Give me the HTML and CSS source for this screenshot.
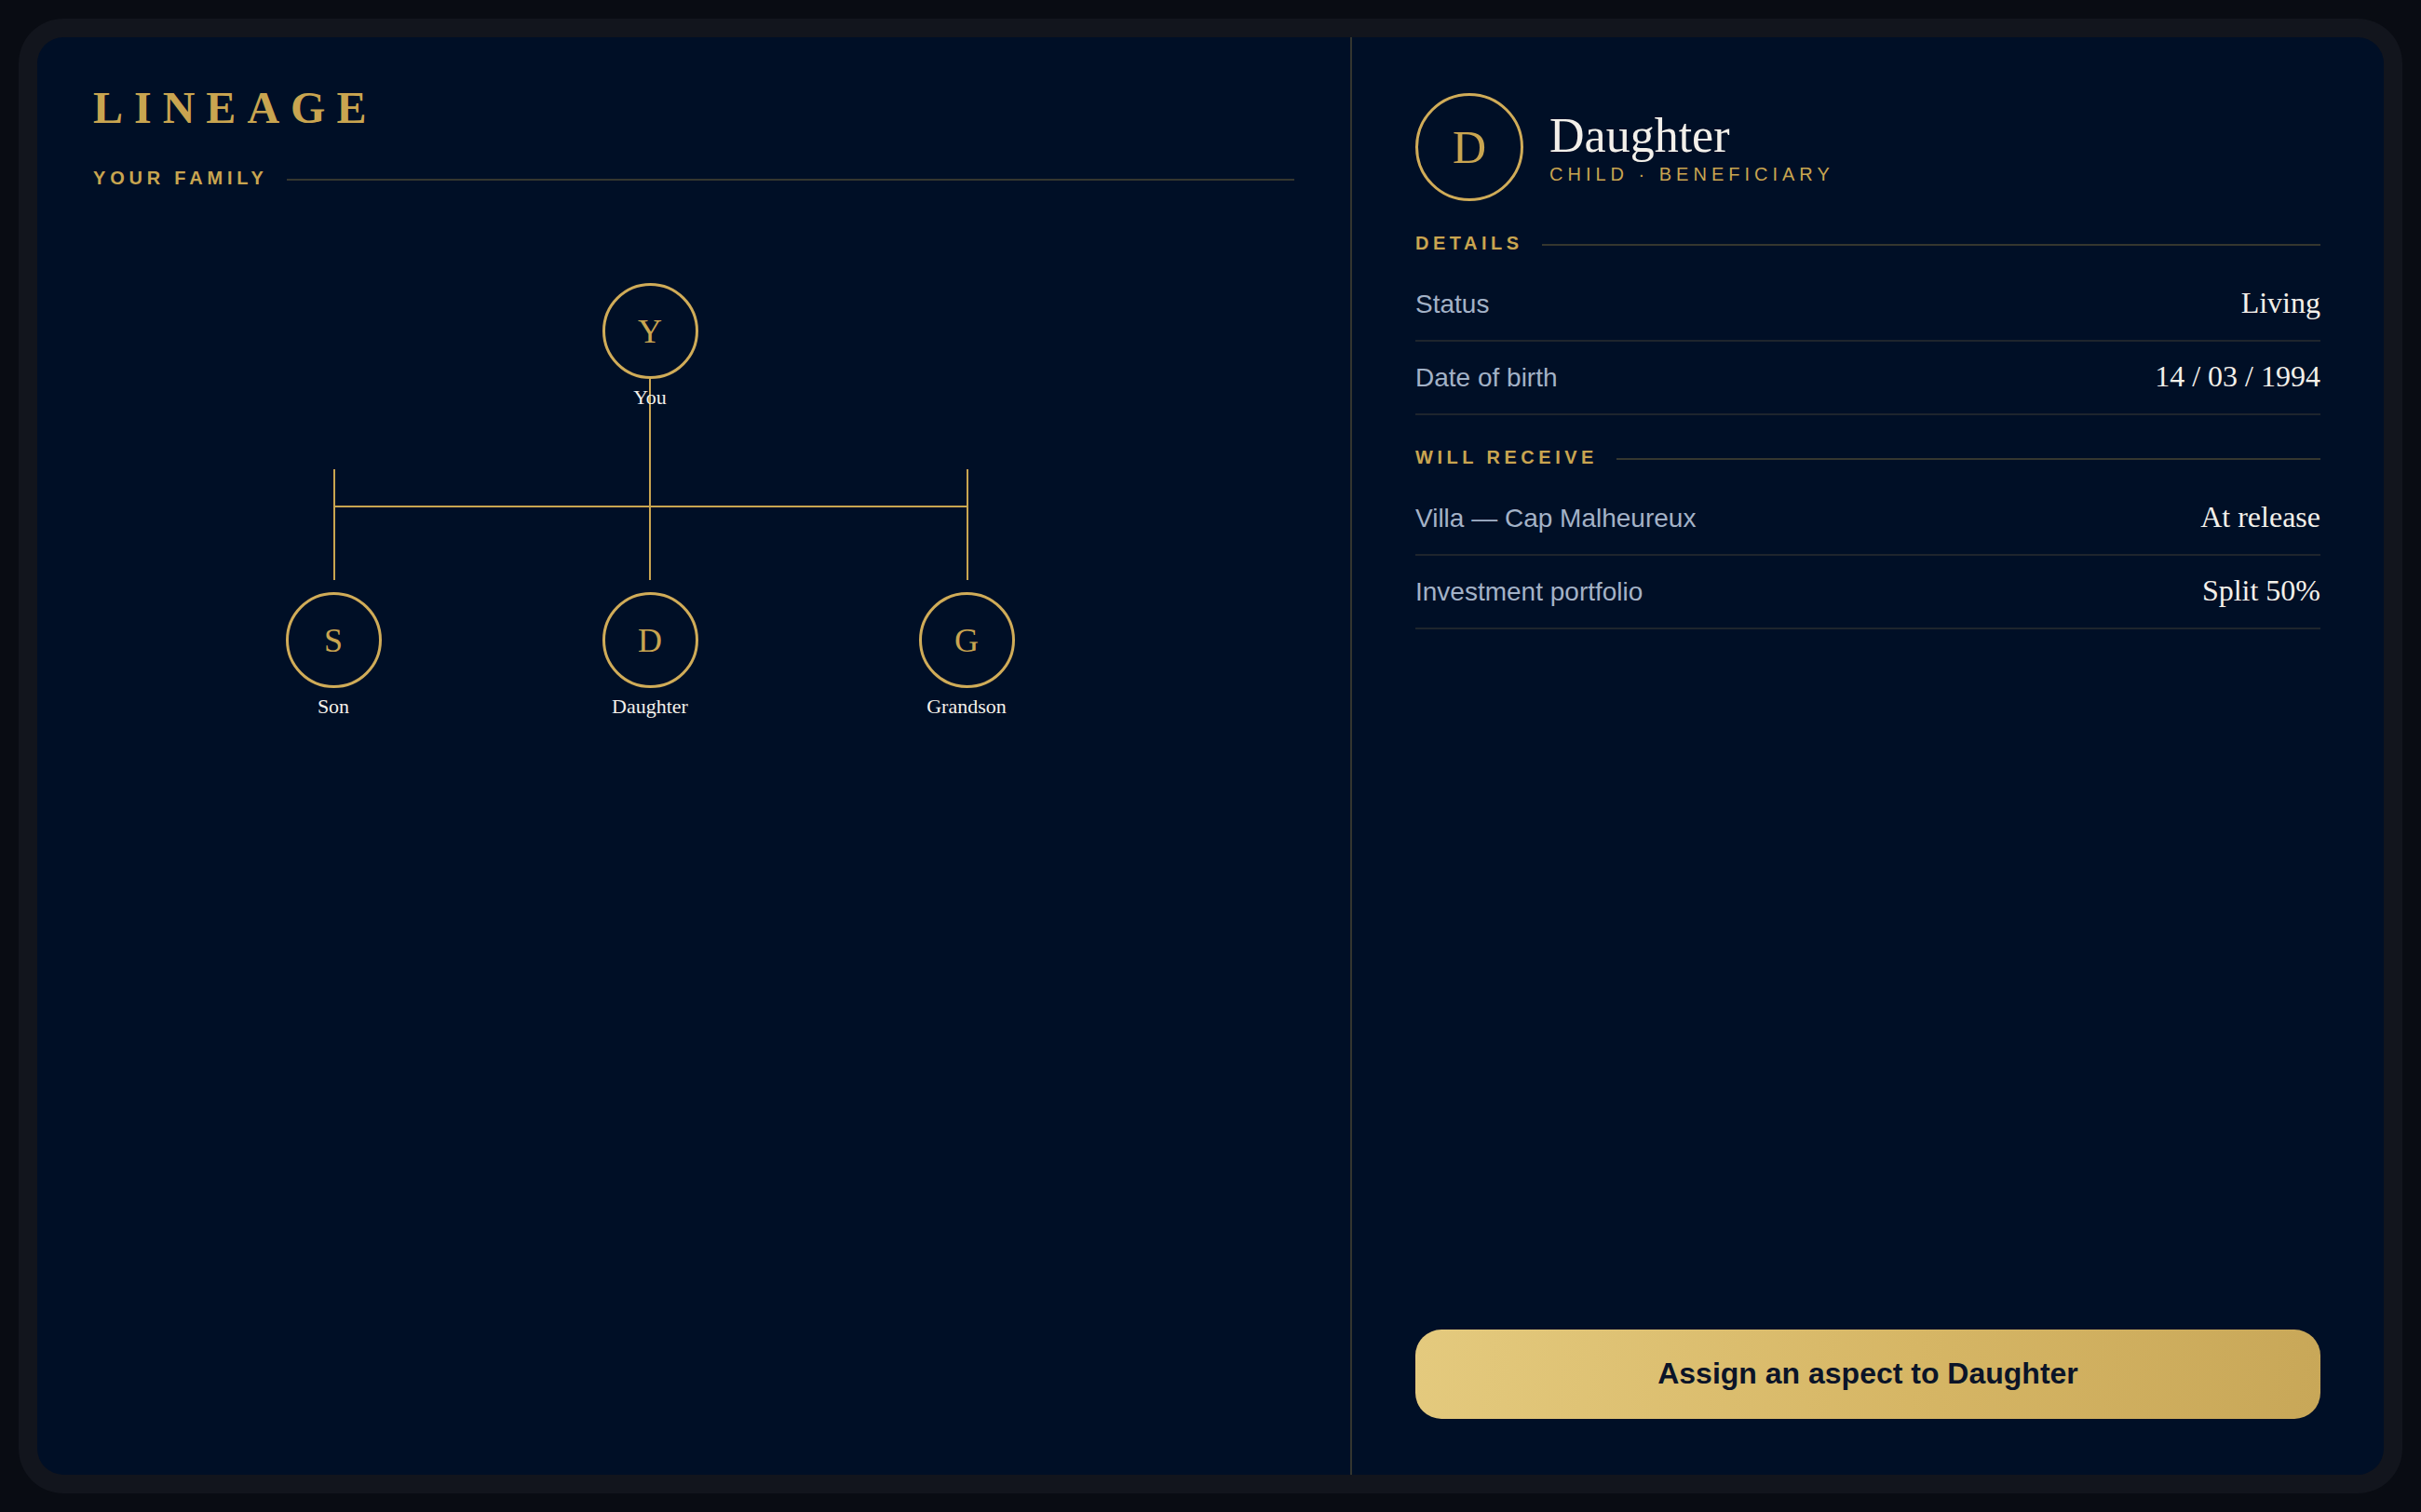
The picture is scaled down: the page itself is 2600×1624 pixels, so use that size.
FILE: index.html
```html
<!DOCTYPE html>
<html lang="en">
<head>
<meta charset="utf-8">
<title>Lineage</title>
<link rel="stylesheet" href="styles.css">
</head>
<body>
<div class="frame">
  <main class="panel">
    <section class="left">
      <h1 class="brand">LINEAGE</h1>
      <div class="section-head"><span class="label">YOUR FAMILY</span><span class="rule"></span></div>
      <div class="tree">
        <svg class="links" width="1290" height="400" viewBox="0 0 1290 400">
          <line x1="598" y1="103" x2="598" y2="319" />
          <line x1="259" y1="240" x2="940" y2="240" />
          <line x1="259" y1="200" x2="259" y2="319" />
          <line x1="939" y1="200" x2="939" y2="319" />
        </svg>
        <div class="node node-you"><div class="ring">Y</div><div class="name">You</div></div>
        <div class="node node-son"><div class="ring">S</div><div class="name">Son</div></div>
        <div class="node node-daughter"><div class="ring">D</div><div class="name">Daughter</div></div>
        <div class="node node-grandson"><div class="ring">G</div><div class="name">Grandson</div></div>
      </div>
    </section>
    <section class="right">
      <header class="person">
        <div class="avatar">D</div>
        <div class="who">
          <div class="person-name">Daughter</div>
          <div class="person-role">CHILD · BENEFICIARY</div>
        </div>
      </header>
      <div class="section-head sec"><span class="label">DETAILS</span><span class="rule"></span></div>
      <div class="row"><span class="key">Status</span><span class="val">Living</span></div>
      <div class="row"><span class="key">Date of birth</span><span class="val">14 / 03 / 1994</span></div>
      <div class="section-head sec"><span class="label">WILL RECEIVE</span><span class="rule"></span></div>
      <div class="row"><span class="key">Villa — Cap Malheureux</span><span class="val">At release</span></div>
      <div class="row"><span class="key">Investment portfolio</span><span class="val">Split 50%</span></div>
      <button class="cta">Assign an aspect to Daughter</button>
    </section>
  </main>
</div>
</body>
</html>
```

FILE: styles.css
```css
* { box-sizing: border-box; }
html, body { margin: 0; padding: 0; }
body {
  background: #090c13;
  padding: 20px;
  height: 1624px;
  font-family: "Liberation Sans", Arial, sans-serif;
}
.frame {
  background: #12151d;
  border-radius: 48px;
  padding: 20px;
  height: 1584px;
}
.panel {
  background: #000f26;
  border-radius: 28px;
  height: 1544px;
  display: grid;
  grid-template-columns: 1410px 1fr;
  overflow: hidden;
}
.left {
  padding: 52px 60px 60px 60px;
}
.brand {
  margin: 0;
  font-family: "Liberation Serif", "Times New Roman", serif;
  font-weight: 700;
  font-size: 48px;
  line-height: 1;
  letter-spacing: 12px;
  color: #c9a550;
}
.section-head {
  display: flex;
  align-items: center;
  height: 20px;
}
.left .section-head { margin-top: 41px; }
.label {
  font-family: "Liberation Sans", Arial, sans-serif;
  font-weight: 700;
  font-size: 20px;
  line-height: 20px;
  letter-spacing: 4.5px;
  color: #c9a550;
  white-space: nowrap;
}
.left .label { letter-spacing: 4.8px; }
.rule {
  flex: 1;
  height: 2px;
  margin-left: 20px;
  margin-top: 4px;
  background: #35372f;
}
.tree {
  position: relative;
  margin-top: 103px;
  height: 480px;
}
.links {
  position: absolute;
  left: 0;
  top: 0;
}
.links line {
  stroke: #c9a550;
  stroke-width: 2;
}
.node {
  position: absolute;
  width: 102px;
  display: flex;
  flex-direction: column;
  align-items: center;
}
.node-you { left: 547px; top: 0; }
.node-son { left: 207px; top: 332px; }
.node-daughter { left: 547px; top: 332px; }
.node-grandson { left: 887px; top: 332px; }
.ring {
  width: 103px;
  height: 103px;
  border: 3.5px solid #d0ac58;
  border-radius: 50%;
  display: flex;
  align-items: center;
  justify-content: center;
  font-family: "Liberation Serif", "Times New Roman", serif;
  font-size: 36px;
  color: #c9a550;
  background: #000f26;
}
.name {
  margin-top: 9px;
  font-family: "Liberation Serif", "Times New Roman", serif;
  font-size: 22px;
  line-height: 1;
  color: #f3f0ea;
  white-space: nowrap;
}
.right {
  border-left: 2px solid #33352f;
  padding: 60px 68px 60px 68px;
  display: flex;
  flex-direction: column;
}
.person {
  display: flex;
  align-items: center;
}
.avatar {
  width: 116px;
  height: 116px;
  border: 3.5px solid #d0ac58;
  border-radius: 50%;
  display: flex;
  align-items: center;
  justify-content: center;
  font-family: "Liberation Serif", "Times New Roman", serif;
  font-size: 50px;
  color: #c9a550;
  flex: none;
}
.who { margin-left: 28px; }
.person-name {
  font-family: "Liberation Serif", "Times New Roman", serif;
  font-size: 52px;
  line-height: 1;
  color: #f3f0ea;
}
.person-role {
  margin-top: 5px;
  font-size: 20px;
  line-height: 1;
  letter-spacing: 5px;
  color: #c9a550;
}
.sec {
  margin-top: 35px;
  margin-bottom: 17px;
}
.row {
  display: flex;
  justify-content: space-between;
  align-items: baseline;
  padding: 17px 0 18px 0;
  border-bottom: 2px solid #1e252d;
}
.key {
  font-size: 28px;
  line-height: 40px;
  color: #a3b2c7;
}
.val {
  font-family: "Liberation Serif", "Times New Roman", serif;
  font-size: 32px;
  line-height: 40px;
  color: #f3f0ea;
}
.cta {
  margin-top: auto;
  height: 96px;
  width: 100%;
  border: none;
  border-radius: 28px;
  background: linear-gradient(100deg, #e4ca7e 0%, #d6b665 55%, #c8a758 100%);
  font-family: "Liberation Sans", Arial, sans-serif;
  font-weight: 700;
  font-size: 32px;
  color: #0b1428;
  padding-bottom: 3px;
  cursor: pointer;
}
```
